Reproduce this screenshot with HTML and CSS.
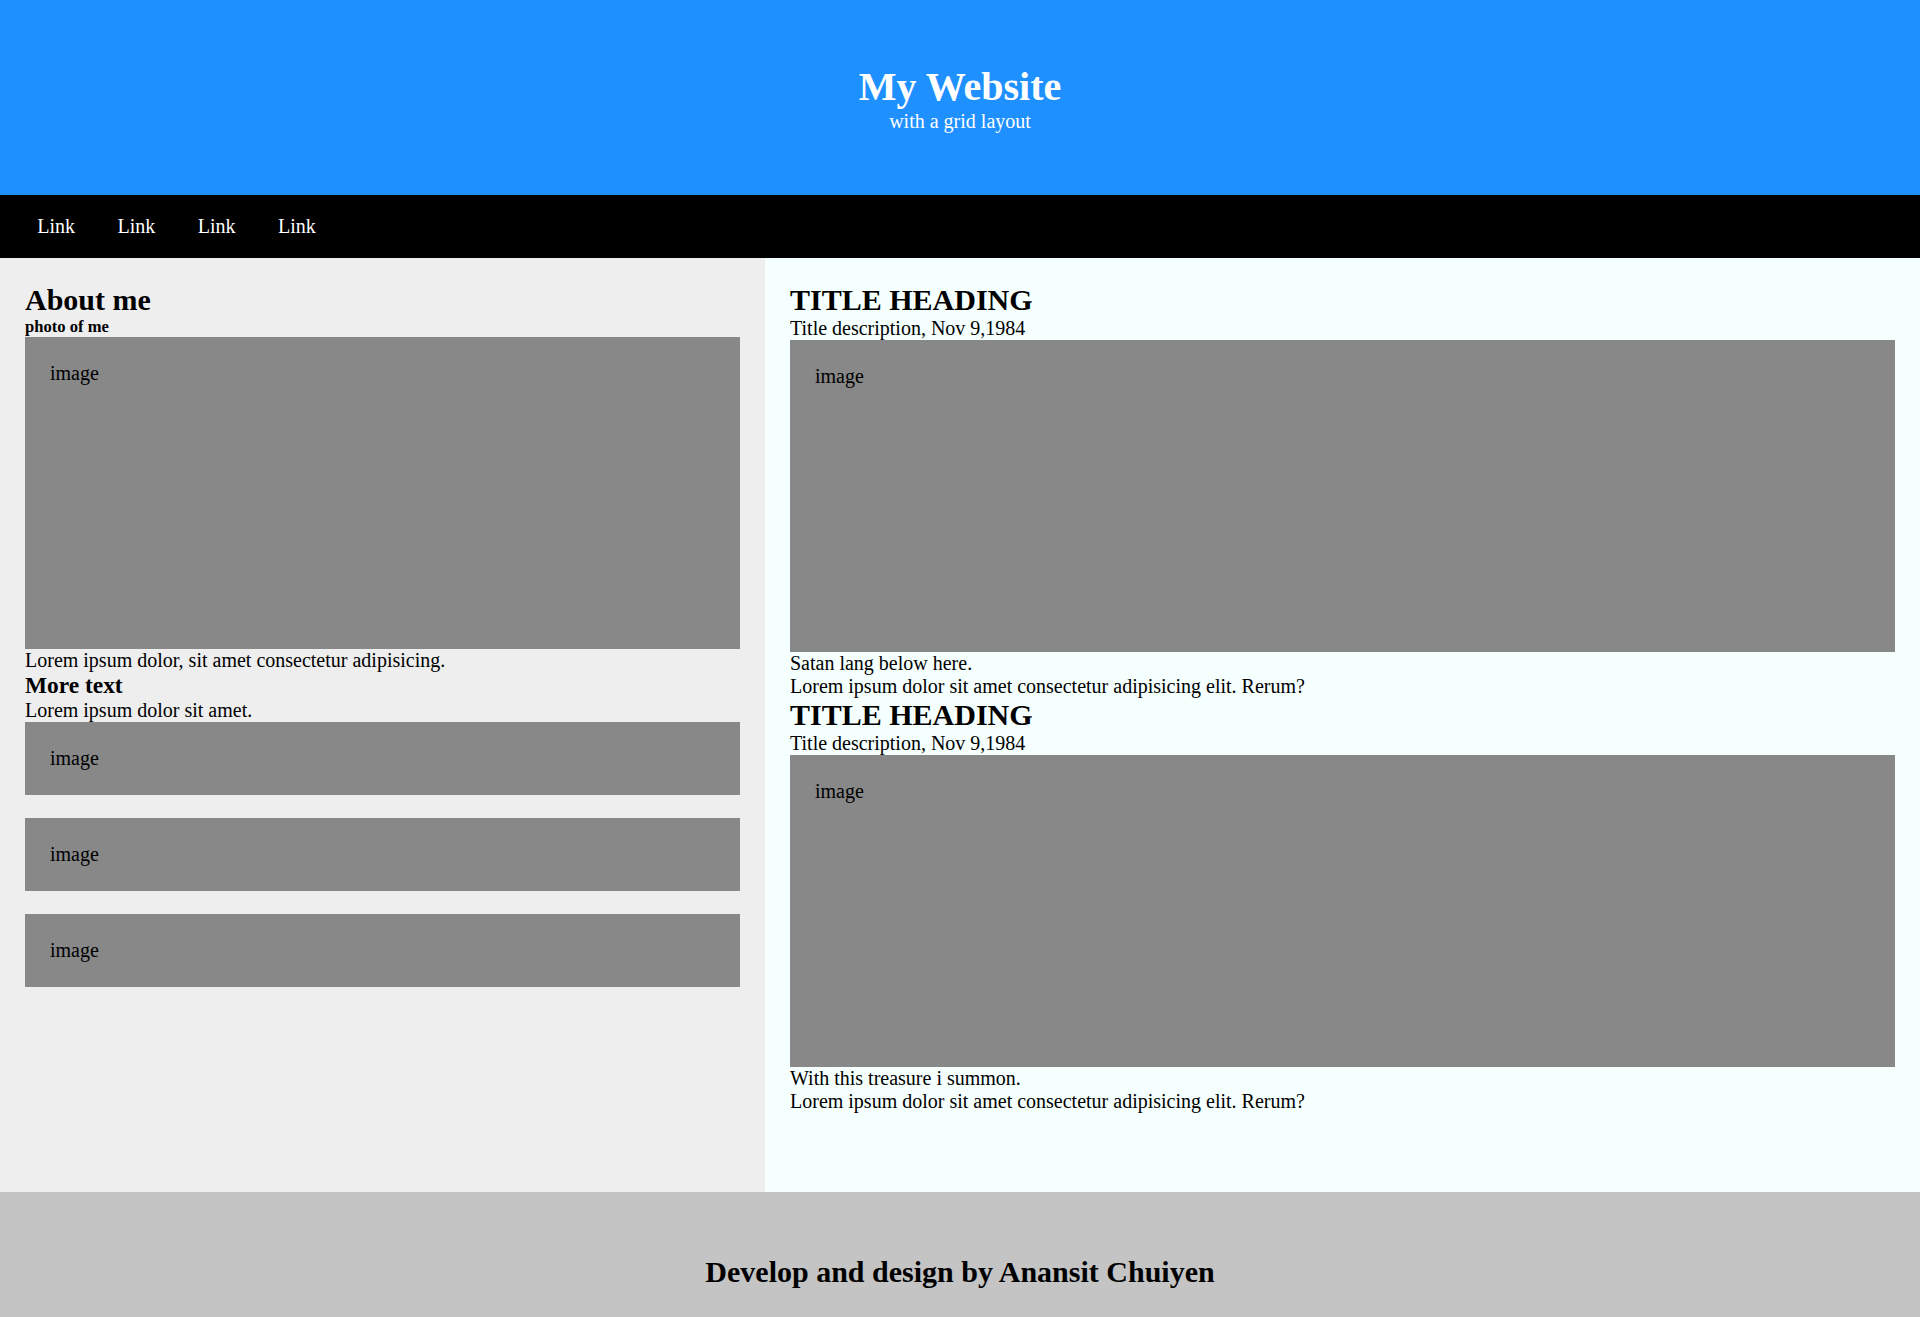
FILE: index.html
```html
<!DOCTYPE html>
<html lang="en">
<head>
<meta charset="utf-8">
<title>My Website</title>
<link rel="stylesheet" href="styles.css">
</head>
<body>
<div class="page">
  <header class="header">
    <h1 class="header-title">My Website</h1>
    <p class="header-sub">with a grid layout</p>
  </header>
  <nav class="topnav">
    <a class="topnav-link" href="#">Link</a>
    <a class="topnav-link" href="#">Link</a>
    <a class="topnav-link" href="#">Link</a>
    <a class="topnav-link" href="#">Link</a>
  </nav>
  <main class="main">
    <section class="leftcol">
      <h2 class="heading">About me</h2>
      <h5 class="small-heading">photo of me</h5>
      <div class="fakeimg fakeimg-tall">image</div>
      <p class="text">Lorem ipsum dolor, sit amet consectetur adipisicing.</p>
      <h3 class="sub-heading">More text</h3>
      <p class="text">Lorem ipsum dolor sit amet.</p>
      <div class="fakeimg">image</div>
      <div class="spacer"></div>
      <div class="fakeimg">image</div>
      <div class="spacer"></div>
      <div class="fakeimg">image</div>
    </section>
    <section class="rightcol">
      <article class="post">
        <h2 class="heading">TITLE HEADING</h2>
        <p class="text">Title description, Nov 9,1984</p>
        <div class="fakeimg fakeimg-tall">image</div>
        <p class="text">Satan lang below here.</p>
        <p class="text">Lorem ipsum dolor sit amet consectetur adipisicing elit. Rerum?</p>
      </article>
      <article class="post">
        <h2 class="heading">TITLE HEADING</h2>
        <p class="text">Title description, Nov 9,1984</p>
        <div class="fakeimg fakeimg-tall">image</div>
        <p class="text">With this treasure i summon.</p>
        <p class="text">Lorem ipsum dolor sit amet consectetur adipisicing elit. Rerum?</p>
      </article>
    </section>
  </main>
  <footer class="footer">
    <h2 class="footer-text">Develop and design by Anansit Chuiyen</h2>
  </footer>
</div>
</body>
</html>
```

FILE: styles.css
```css
html, body {
  margin: 0;
  padding: 0;
}

body {
  font-family: "Liberation Serif", "Times New Roman", serif;
  font-size: 20px;
  color: #000;
}

.page {
  display: grid;
  grid-template-rows: auto auto 1fr 125px;
  height: 100vh;
}

.header {
  background: #1e90ff;
  color: #fff;
  text-align: center;
  height: 195px;
  box-sizing: border-box;
  padding: 62.5px 20px 0;
}

.header-title {
  margin: 0;
  font-size: 40px;
  font-weight: bold;
}

.header-sub {
  margin: 0;
  font-size: 20px;
}

.topnav {
  background: #000;
  display: flex;
  padding-left: 16px;
}

.topnav-link {
  color: #fff;
  text-decoration: none;
  padding: 20px 21.25px;
  line-height: 23px;
}

.main {
  display: grid;
  grid-template-columns: 765px 1fr;
}

.leftcol {
  background: #eeeeee;
  padding: 25px;
}

.rightcol {
  background: #f5fffe;
  padding: 25px;
}

.heading {
  margin: 0;
  font-size: 30px;
  font-weight: bold;
}

.small-heading {
  margin: 0;
  font-size: 16.6px;
  font-weight: bold;
}

.sub-heading {
  margin: 0;
  font-size: 23.4px;
  font-weight: bold;
}

.text {
  margin: 0;
}

.fakeimg {
  background: #888888;
  padding: 25px;
  line-height: 23px;
}

.fakeimg-tall {
  height: 262px;
}

.spacer {
  height: 23px;
}

.footer {
  background: #c4c4c4;
  text-align: center;
  padding-top: 62.5px;
  box-sizing: border-box;
}

.footer-text {
  margin: 0;
  font-size: 30px;
  font-weight: bold;
}
```
